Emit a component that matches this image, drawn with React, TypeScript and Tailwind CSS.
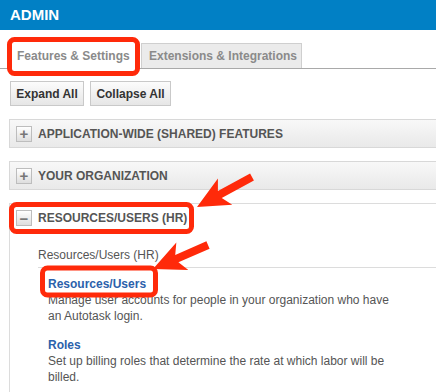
import React from "react";

function Arrow({ tail, tip }: { tail: [number, number]; tip: [number, number] }) {
  const dx = tail[0] - tip[0];
  const dy = tail[1] - tip[1];
  const len = Math.hypot(dx, dy);
  const ux = dx / len;
  const uy = dy / len;
  const nx = -uy;
  const ny = ux;
  const hl = 32;
  const hw = 15;
  const bx = tip[0] + ux * hl;
  const by = tip[1] + uy * hl;
  const c1 = [bx + nx * hw, by + ny * hw];
  const c2 = [bx - nx * hw, by - ny * hw];
  const notch = [tip[0] + ux * (hl - 6), tip[1] + uy * (hl - 6)];
  const sw = 4;
  const s1 = [notch[0] + nx * sw, notch[1] + ny * sw];
  const s2 = [notch[0] - nx * sw, notch[1] - ny * sw];
  const t1 = [tail[0] + nx * sw, tail[1] + ny * sw];
  const t2 = [tail[0] - nx * sw, tail[1] - ny * sw];
  const pts = [tip, c1, s1, t1, t2, s2, c2].map((p) => `${p[0]},${p[1]}`).join(" ");
  return <polygon points={pts} fill="#ff2a0a" />;
}

function Section({ title, open }: { title: string; open?: boolean }) {
  return (
    <div
      className={
        open
          ? "h-[29px] flex items-center border-t border-[#dcdcdc] bg-white pl-[6px]"
          : "h-[29px] flex items-center border border-r-0 border-[#d8d8d8] bg-gradient-to-b from-[#f8f8f8] to-[#e9e9e9] pl-[6px]"
      }
    >
      <div className="w-[16px] h-[16px] border border-[#bdbdbd] bg-gradient-to-b from-white to-[#dedede] flex items-center justify-center text-[#777] text-[15px] leading-none font-bold">
        {open ? "−" : "+"}
      </div>
      <span className="ml-[6px] text-[12px] font-bold text-[#555]">{title}</span>
    </div>
  );
}

export default function App() {
  return (
    <div
      className="relative w-[436px] h-[392px] overflow-hidden bg-white"
      style={{ fontFamily: '"Liberation Sans", Arial, sans-serif' }}
    >
      <div className="h-[30px] bg-[#0180c5] flex items-center px-[10px]">
        <span className="text-white font-bold text-[15px]">ADMIN</span>
      </div>

      <div className="mt-[13px] px-[10px] flex items-end gap-[3px] border-b border-[#a9a9a9] h-[26px]">
        <div className="h-[26px] w-[128px] bg-white flex items-center pl-[7px] text-[12px] font-bold text-[#8a8a8a] -mb-px">
          Features &amp; Settings
        </div>
        <div className="h-[25px] w-[161px] bg-[#ebebeb] border border-b-0 border-[#cfcfcf] flex items-center pl-[7px] text-[12px] font-bold text-[#8a8a8a]">
          Extensions &amp; Integrations
        </div>
      </div>

      <div className="mt-[12px] px-[10px] flex gap-[6px]">
        <div className="h-[25px] w-[74px] border border-[#c9c9c9] bg-gradient-to-b from-[#fcfcfc] to-[#e6e6e6] flex items-center justify-center text-[12px] font-bold text-[#333]">
          Expand All
        </div>
        <div className="h-[25px] w-[81px] border border-[#c9c9c9] bg-gradient-to-b from-[#fcfcfc] to-[#e6e6e6] flex items-center justify-center text-[12px] font-bold text-[#333]">
          Collapse All
        </div>
      </div>

      <div className="ml-[9px] mt-[13px]">
        <Section title="APPLICATION-WIDE (SHARED) FEATURES" />
      </div>
      <div className="ml-[9px] mt-[13px]">
        <Section title="YOUR ORGANIZATION" />
      </div>
      <div className="ml-[9px] mt-[13px] border-l border-[#dcdcdc] pb-[40px]">
        <Section title="RESOURCES/USERS (HR)" open />
        <div className="pl-[28px] pt-[15px]">
          <div className="text-[12px] text-[#555] pb-[4px] border-b border-[#dcdcdc] leading-[16px]">
            Resources/Users (HR)
          </div>
          <div className="pl-[10px] pt-[8px] w-[360px] text-[12px] leading-[16px]">
            <div className="font-bold text-[#2b61ab]">Resources/Users</div>
            <div className="text-[#555]">
              Manage user accounts for people in your organization who have an Autotask login.
            </div>
            <div className="font-bold text-[#2b61ab] mt-[13px]">Roles</div>
            <div className="text-[#555]">
              Set up billing roles that determine the rate at which labor will be billed.
            </div>
          </div>
        </div>
      </div>

      <svg className="absolute inset-0 pointer-events-none" width="436" height="392">
        <rect x="9.5" y="39.5" width="128" height="34" rx="5" fill="none" stroke="#ff2a0a" strokeWidth="5" />
        <rect x="11.5" y="204.5" width="180" height="27" rx="5" fill="none" stroke="#ff2a0a" strokeWidth="5" />
        <rect x="42.5" y="268" width="113" height="27" rx="5" fill="none" stroke="#ff2a0a" strokeWidth="5" />
        <Arrow tail={[252, 177]} tip={[197, 207]} />
        <Arrow tail={[208, 245]} tip={[153, 269]} />
      </svg>
    </div>
  );
}
